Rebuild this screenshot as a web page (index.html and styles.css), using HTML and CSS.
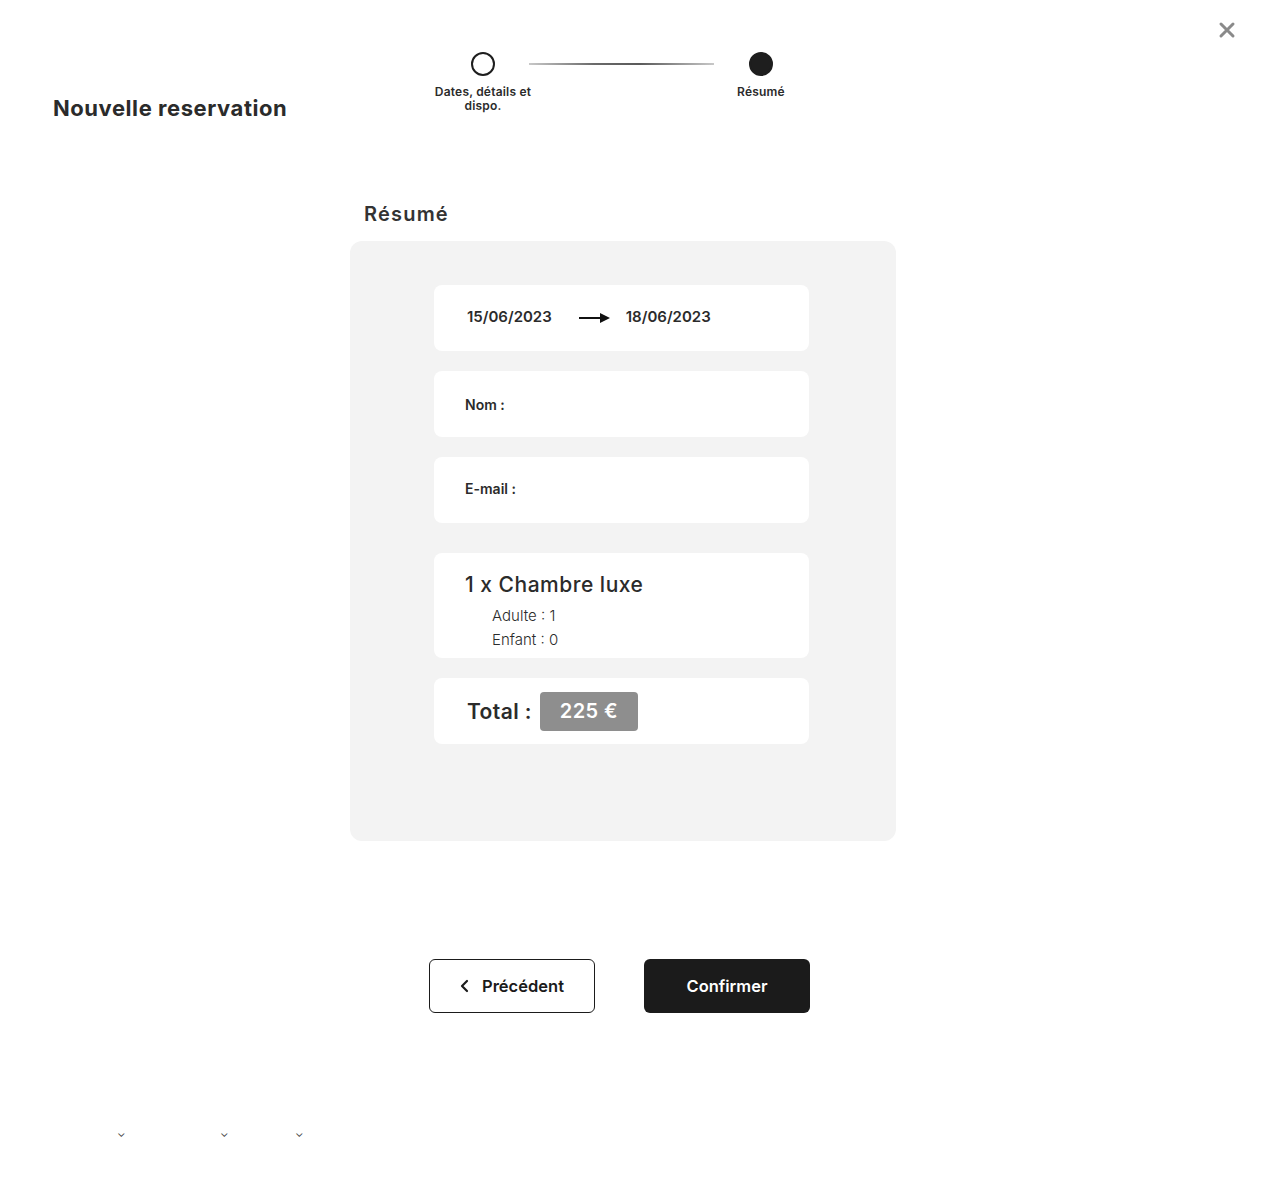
FILE: index.html
```html
<!DOCTYPE html>
<html lang="fr">
<head>
    <meta charset="UTF-8">
    <meta name="viewport" content="width=device-width, initial-scale=1.0">
    <title>Nouvelle reservation</title>
    <link rel="stylesheet" href="styles.css">
</head>
<body>

    <button class="close" aria-label="Fermer">
        <svg width="18" height="18" viewBox="0 0 18 18"><path d="M3 3 L15 15 M15 3 L3 15" stroke="#8a8a8a" stroke-width="3" stroke-linecap="round"/></svg>
    </button>

    <header class="top">
        <h1 class="title">Nouvelle reservation</h1>

        <div class="stepper">
            <div class="step step-first">
                <span class="dot"></span>
                <span class="step-label">Dates, détails et dispo.</span>
            </div>
            <div class="step-line"></div>
            <div class="step step-last">
                <span class="dot dot-active"></span>
                <span class="step-label">Résumé</span>
            </div>
        </div>
    </header>

    <main class="summary">
        <h2>Résumé</h2>

        <div class="panel">
            <div class="card card-dates">
                <span>15/06/2023</span>
                <svg class="arrow" width="31" height="10" viewBox="0 0 31 10"><path d="M0 5 H22" stroke="#111" stroke-width="2"/><path d="M21 0 L31 5 L21 10 Z" fill="#111"/></svg>
                <span>18/06/2023</span>
            </div>

            <div class="card card-field">Nom :</div>
            <div class="card card-field field-mail">E-mail :</div>

            <div class="card card-room">
                <h3>1 x Chambre luxe</h3>
                <p>Adulte : 1</p>
                <p>Enfant : 0</p>
            </div>

            <div class="card card-total">
                <span class="total-label">Total :</span>
                <span class="price">225 €</span>
            </div>
        </div>

        <div class="actions">
            <button class="btn btn-back">
                <svg width="10" height="14" viewBox="0 0 10 14"><path d="M7 2 L2 7 L7 12" fill="none" stroke="#1b1b1b" stroke-width="2.2" stroke-linecap="round" stroke-linejoin="round"/></svg>
                Précédent
            </button>
            <button class="btn btn-confirm">Confirmer</button>
        </div>
    </main>

    <div class="carets">
        <span class="caret c1">⌄</span>
        <span class="caret c2">⌄</span>
        <span class="caret c3">⌄</span>
    </div>

</body>
</html>
```

FILE: styles.css
```css
* {
    box-sizing: border-box;
}
body {
    font-family: 'Inter', 'Open Sans', sans-serif;
    background-color: #ffffff;
    color: #2b2b2b;
    margin: 0;
    padding: 0;
}
button {
    font-family: inherit;
}
.close {
    position: absolute;
    top: 21px;
    right: 27px;
    width: 18px;
    height: 18px;
    padding: 0;
    border: none;
    background: none;
    cursor: pointer;
}
.top {
    display: flex;
    align-items: flex-start;
    height: 150px;
    padding: 52px 0 0 53px;
}
.title {
    width: 380px;
    margin: 43px 0 0;
    font-size: 22px;
    line-height: 26px;
    font-weight: 700;
    color: #2b2b2b;
    letter-spacing: 0.55px;
}
.stepper {
    display: flex;
    align-items: flex-start;
}
.step {
    display: flex;
    flex-direction: column;
    align-items: center;
    text-align: center;
}
.step-first {
    width: 100px;
}
.step-last {
    width: 60px;
}
.dot {
    width: 24px;
    height: 24px;
    border-radius: 50%;
    border: 2px solid #1e1e1e;
    background: #fff;
}
.dot-active {
    background: #1e1e1e;
}
.step-label {
    margin-top: 9px;
    font-size: 12px;
    line-height: 14px;
    font-weight: 600;
    letter-spacing: 0.2px;
    color: #2b2b2b;
}
.step-line {
    width: 185px;
    height: 2px;
    margin: 11px 17px 0 -4px;
    background: linear-gradient(90deg, #c8c8c8, #6a6a6a 35%, #5a5a5a 60%, #c8c8c8);
}
.summary {
    margin-left: 350px;
    width: 546px;
    padding-top: 52px;
}
.summary h2 {
    margin: 0 0 15px 14px;
    font-size: 20px;
    line-height: 24px;
    font-weight: 600;
    letter-spacing: 1.2px;
    color: #333;
}
.panel {
    display: flex;
    flex-direction: column;
    gap: 20px;
    height: 600px;
    padding: 44px 0 0 84px;
    background-color: #f3f3f3;
    border-radius: 12px;
}
.card {
    width: 375px;
    background-color: #fff;
    border-radius: 8px;
}
.card-dates {
    display: flex;
    align-items: center;
    height: 66px;
    padding: 0 0 3px 33px;
    font-size: 15px;
    font-weight: 600;
}
.card-dates .arrow {
    margin: 2px 16px 0 27px;
}
.card-field {
    display: flex;
    align-items: center;
    height: 66px;
    padding-left: 31px;
    font-size: 14px;
    font-weight: 600;
}
.field-mail {
    padding-bottom: 4px;
}
.card-room {
    margin-top: 10px;
    height: 105px;
    padding: 20px 0 0 31px;
}
.card-room h3 {
    margin: 0 0 7px;
    font-size: 21px;
    line-height: 24px;
    font-weight: 500;
    letter-spacing: 0.5px;
    color: #2b2b2b;
}
.card-room p {
    margin: 0 0 0 27px;
    font-size: 15px;
    line-height: 24px;
    font-weight: 300;
    color: #2b2b2b;
}
.card-total {
    display: flex;
    align-items: center;
    height: 66px;
    padding-left: 33px;
}
.total-label {
    font-size: 21px;
    font-weight: 600;
    letter-spacing: 0.4px;
    margin-right: 8px;
}
.price {
    display: inline-flex;
    align-items: center;
    justify-content: center;
    width: 98px;
    height: 39px;
    background-color: #8e8e8e;
    border-radius: 4px;
    color: #fff;
    font-size: 20px;
    font-weight: 600;
    letter-spacing: 0.4px;
}
.actions {
    display: flex;
    gap: 49px;
    margin: 118px 0 0 79px;
}
.btn {
    display: flex;
    align-items: center;
    justify-content: center;
    width: 166px;
    height: 54px;
    border-radius: 6px;
    font-size: 16.5px;
    font-weight: 600;
    cursor: pointer;
}
.btn-back {
    gap: 12px;
    background: #fff;
    color: #1b1b1b;
    border: 1.5px solid #1b1b1b;
}
.btn-confirm {
    background: #1b1b1b;
    color: #fff;
    border: none;
}
.carets {
    display: flex;
    margin-top: 113px;
    padding-left: 117px;
    font-size: 11px;
    color: #444;
}
.caret {
    width: 8px;
}
.c2 {
    margin-left: 95px;
}
.c3 {
    margin-left: 67px;
}
```
